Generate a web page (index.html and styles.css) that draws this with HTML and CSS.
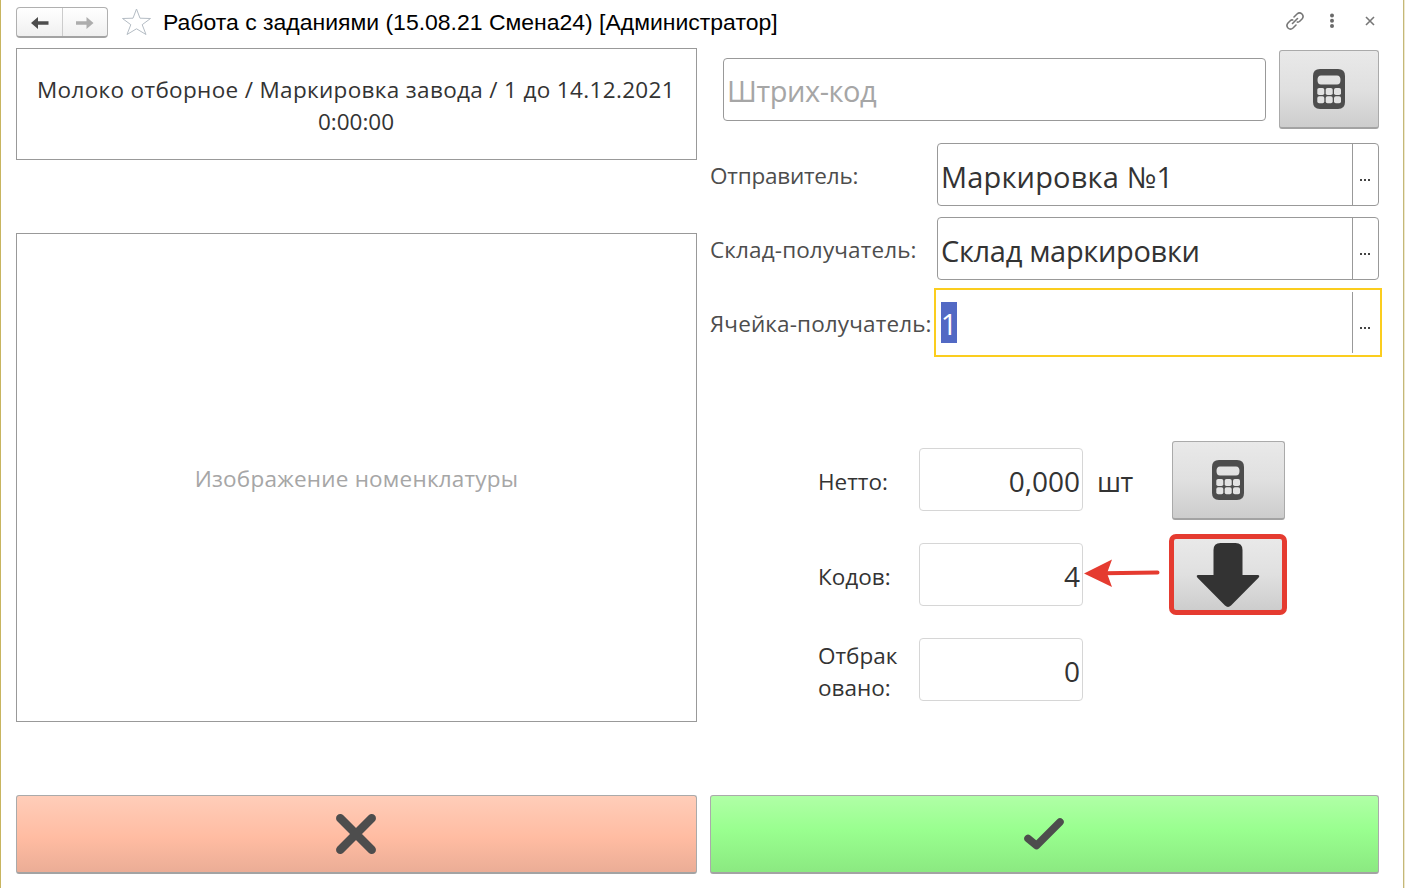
FILE: index.html
```html
<!DOCTYPE html>
<html lang="ru">
<head>
<meta charset="utf-8">
<title>Работа с заданиями</title>
<link rel="stylesheet" href="styles.css">
</head>
<body>
<svg class="defs" width="0" height="0">
  <symbol id="calc" viewBox="0 0 34 40">
    <path fill="#4d4d4d" fill-rule="evenodd" d="M8 0H26Q33 0 33 7V33Q33 40 26 40H8Q1 40 1 33V7Q1 0 8 0ZM9 6.500Q5.500 6.500 5.500 11Q5.500 15.500 9 15.500H25Q28.500 15.500 28.500 11Q28.500 6.500 25 6.500Z"/>
    <g fill="#e2e2e2"><rect x="5.300" y="19" width="7" height="7" rx="1.800"/><rect x="13.700" y="19" width="7" height="7" rx="1.800"/><rect x="22" y="19" width="7" height="7" rx="1.800"/><rect x="5.300" y="27.300" width="7" height="7" rx="1.800"/><rect x="13.700" y="27.300" width="7" height="7" rx="1.800"/><rect x="22" y="27.300" width="7" height="7" rx="1.800"/></g>
  </symbol>
</svg>
<div class="window">
  <header class="titlebar">
    <div class="history">
      <button class="hist"><svg width="18" height="12" viewBox="0 0 18 12"><path d="M0 6L7 0V4.300H17.500V7.700H7V12Z" fill="#4d4d4d"/></svg></button>
      <button class="hist"><svg width="18" height="12" viewBox="0 0 18 12"><path d="M17.500 6L10.500 0V4.300H0V7.700H10.500V12Z" fill="#adadad"/></svg></button>
    </div>
    <svg class="star" width="30" height="28" viewBox="0 0 30 28"><path d="M15.500 2L19 11.200L29.500 11.500L21.200 17.700L25 27.500L15.500 21.800L6 27.500L9.800 17.700L1.500 11.500L12 11.200Z" fill="#fff" stroke="#b4bcc4" stroke-width="1"/></svg>
    <h1 class="title">Работа с заданиями (15.08.21 Смена24) [Администратор]</h1>
    <div class="tools">
      <svg width="20" height="20" viewBox="0 0 20 20" fill="none" stroke="#777" stroke-width="1.600" stroke-linecap="round"><path d="M7.500 12.500L12.500 7.500M9 6L12 3Q14.500 .8 17 3Q19.200 5.500 17 8L14.500 10.500Q13.500 11.300 12.300 11M11 14L8 17Q5.500 19.200 3 17Q.8 14.500 3 12L5.500 9.500Q6.500 8.700 7.700 9"/></svg>
      <svg width="6" height="16" viewBox="0 0 6 16" fill="#6a6a6a"><circle cx="3" cy="2.500" r="2"/><circle cx="3" cy="7.800" r="2"/><circle cx="3" cy="13" r="2"/></svg>
      <svg width="10" height="10" viewBox="0 0 10 10" stroke="#777" stroke-width="1.600"><path d="M1 1L9 9M9 1L1 9"/></svg>
    </div>
  </header>
  <main class="body">
    <section class="left">
      <div class="task"><span class="task-line">Молоко отборное / Маркировка завода / 1 до 14.12.2021</span><span class="task-time">0:00:00</span></div>
      <div class="image"><span>Изображение номенклатуры</span></div>
      <button class="btn cancel"><svg width="40" height="40" viewBox="0 0 40 40"><path d="M4.300 4.300L35.700 35.700M35.700 4.300L4.300 35.700" stroke="#4d4d4d" stroke-width="8.500" stroke-linecap="round"/></svg></button>
    </section>
    <section class="right">
      <div class="scan">
        <div class="input barcode"><span>Штрих-код</span></div>
        <button class="btn grey scan-btn"><svg width="34" height="40"><use href="#calc"/></svg></button>
      </div>
      <div class="fields">
        <div class="field"><label class="sender">Отправитель:</label><div class="input pick"><span class="v1">Маркировка №1</span><i class="more"><b></b><b></b><b></b></i></div></div>
        <div class="field"><label class="store">Склад-получатель:</label><div class="input pick"><span class="v2">Склад маркировки</span><i class="more"><b></b><b></b><b></b></i></div></div>
        <div class="field"><label class="cell">Ячейка-получатель:</label><div class="input pick focus"><span class="sel">1</span><i class="more"><b></b><b></b><b></b></i></div></div>
      </div>
      <div class="counts">
        <div class="count"><label>Нетто:</label><div class="input num">0,000</div><span class="unit">шт</span><button class="btn grey side"><svg width="34" height="40"><use href="#calc"/></svg></button></div>
        <div class="count"><label>Кодов:</label><div class="input num">4</div>
          <svg class="pointer" width="78" height="30" viewBox="0 0 78 30"><path d="M20 15.300L73.500 14.500" stroke="#e53b30" stroke-width="4" stroke-linecap="round"/><path d="M0 15.500L28 1.500L23 15.300L28 29Z" fill="#e53b30"/></svg>
          <button class="btn grey side marked"><svg width="64" height="66" viewBox="0 0 64 66"><path d="M17.500 33V8Q17.500 1 24.500 1H39.500Q46.500 1 46.500 8V33H61.500Q64.500 33.200 62.500 35.800L35 63.500Q32 66.300 29 63.500L1.500 35.800Q-.5 33.200 2.500 33Z" fill="#333"/></svg></button></div>
        <div class="count"><label>Отбрак<br>овано:</label><div class="input num">0</div></div>
      </div>
      <button class="btn ok"><svg width="40" height="32" viewBox="0 0 40 32"><path d="M4 20.500L12.500 27.500L36 4" fill="none" stroke="#4d4d4d" stroke-width="7.500" stroke-linecap="round" stroke-linejoin="round"/></svg></button>
    </section>
  </main>
</div>
</body>
</html>
```
FILE: styles.css
```css
* { box-sizing: border-box; }
body { margin: 0; background: #fff; font-family: "Open Sans", "Noto Sans", sans-serif; font-size: 22.5px; color: #333; }
button { padding: 0; margin: 0; font: inherit; }
svg { display: block; flex: none; }
.defs { position: absolute; }
.window { width: 1405px; height: 888px; overflow: hidden; border-left: 1px solid #c8b560; border-right: 1px solid #eee8cf; box-shadow: inset -1px 0 #c4b878; padding: 0 24px 14px 15px; display: flex; flex-direction: column; }
.titlebar { height: 48px; flex: none; display: flex; align-items: flex-start; padding-top: 7px; }
.history { display: flex; width: 92px; height: 31px; border: 1px solid #b0b0b0; border-bottom: 2px solid #a3a3a3; border-radius: 4px; background: linear-gradient(#fff, #f0f0f0); }
.hist { flex: 1; display: flex; align-items: center; justify-content: center; padding: 1px 0 0 1px; border: 0; background: none; }
.hist + .hist { border-left: 1px solid #ccc; padding-left: 0; }
.star { margin-left: 13px; }
.title { margin: 2px 0 0 12px; font: 400 22.97px/26px "Liberation Sans", Arial, sans-serif; color: #000; white-space: nowrap; }
.tools { margin: 4px 5px 0 auto; display: flex; align-items: center; height: 20px; }
.tools svg + svg { margin-left: 24px; }
.tools svg + svg + svg { margin-left: 30px; }
.body { flex: 1; display: grid; grid-template-columns: 681px 669px; column-gap: 13px; }
.left, .right { display: flex; flex-direction: column; }
.task { height: 112px; border: 1px solid #999; text-align: center; line-height: 32px; padding: 25px 1px 0 0; margin-bottom: 73px; white-space: nowrap; }
.task span { display: block; }
.task-line { letter-spacing: .34px; }
.image { height: 489px; border: 1px solid #999; display: flex; align-items: center; justify-content: center; color: #a6a6a6; margin-bottom: 73px; padding-top: 2px; letter-spacing: .22px; white-space: nowrap; }
.btn { display: flex; align-items: center; justify-content: center; height: 79px; padding-right: 2px; border: 1px solid #aaa; border-bottom: 2px solid #a3a3a3; border-radius: 3px; }
.cancel { background: linear-gradient(#ffcdb9, #ffbca2 55%, #ebad96); }
.ok { margin-top: auto; background: linear-gradient(#b0ffa6, #99ff8f 45%, #8be981); }
.grey { background: linear-gradient(#e9e9e9, #e0e0e0 50%, #cdcdcd); }
.scan { display: flex; align-items: flex-start; margin-top: 2px; height: 79px; gap: 13px; padding-left: 13px; }
.input { height: 63px; border: 1px solid #999; border-radius: 4px; background: #fff; font-size: 29px; line-height: 40px; white-space: nowrap; display: flex; align-items: center; padding: 2px 2px 0 3px; }
.barcode { width: 543px; margin-top: 8px; color: #a6a6a6; letter-spacing: -.45px; }
.scan-btn { width: 100px; padding-right: 0; }
.fields { margin-top: 14px; display: flex; flex-direction: column; gap: 11px; }
.field { display: flex; align-items: center; height: 63px; color: #4d4d4d; white-space: nowrap; }
.field label { width: 227px; flex: none; padding-top: 1px; letter-spacing: .13px; }
.field .sender { letter-spacing: -.22px; }
.pick { flex: 1; color: #333; padding: 0 0 0 3px; }
.pick span { margin-top: 4px; }
.v1 { letter-spacing: .17px; }
.v2 { letter-spacing: -.33px; }
.more { margin-left: auto; align-self: stretch; width: 26px; border-left: 1px solid #999; display: flex; justify-content: center; align-items: center; gap: 2px; padding: 10px 2px 0 0; }
.more b { width: 2px; height: 2px; background: #444; }
.focus { border-color: #fff; border-radius: 0; outline: 2px solid #fbcd1e; outline-offset: 1px; }
.pick .sel { background: #5269c4; color: #fff; width: 16px; height: 41px; margin: -1px 0 0; display: flex; align-items: center; justify-content: center; padding-top: 3px; }
.counts { margin: 87px 0 0 108px; display: flex; flex-direction: column; gap: 16px; }
.count { display: flex; align-items: center; height: 79px; line-height: 32px; }
.count label { width: 101px; padding-top: 2px; }
.num { width: 164px; margin-bottom: 2px; justify-content: flex-end; border-color: #d6d6d6; font-size: 28px; }
.unit { width: 75px; margin-left: 14px; padding-top: 2px; font-size: 27px; letter-spacing: -.5px; }
.side { width: 113px; }
.pointer { margin: 0 9px 0 1px; position: relative; top: -3px; }
.marked { width: 118px; height: 81px; margin: 0 0 2px -2px; padding: 1px 0 0; border: 5px solid #e53b30; border-radius: 7px; }
```
